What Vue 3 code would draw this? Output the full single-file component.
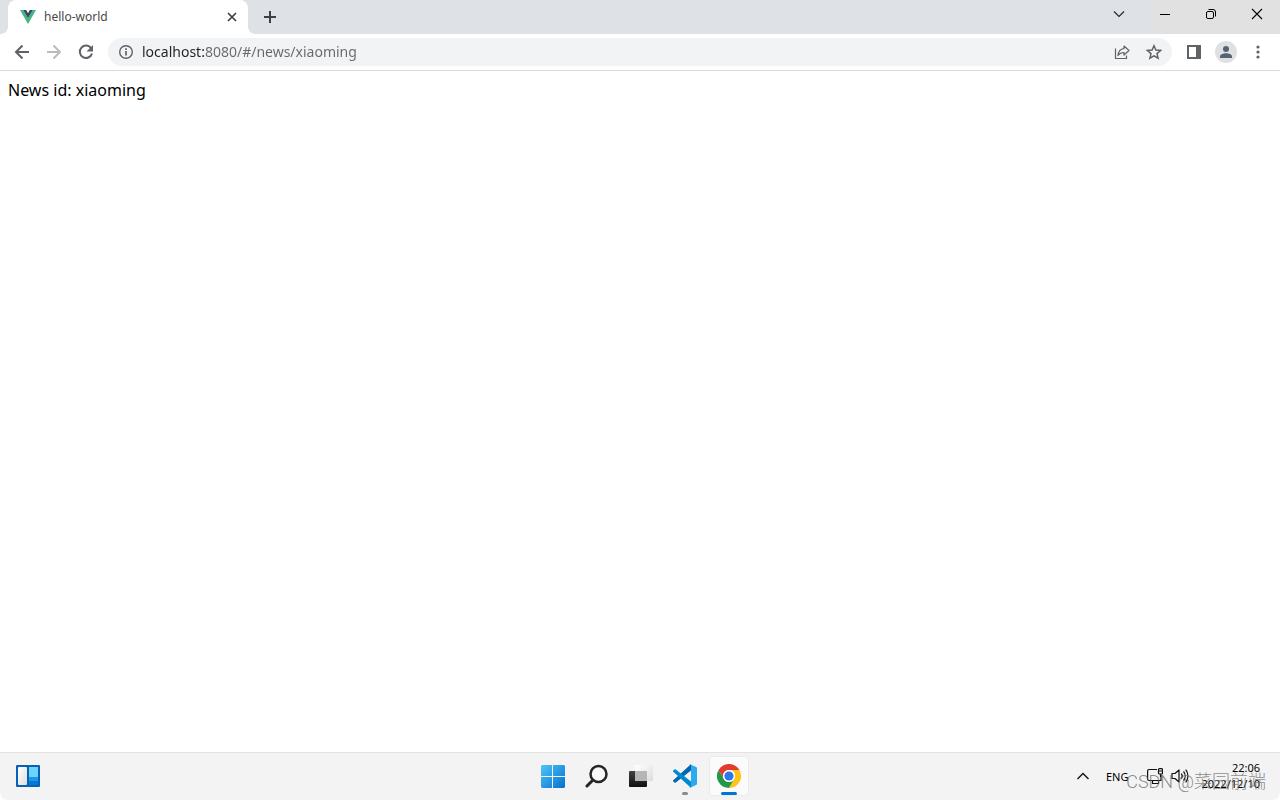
<script setup>
import { ref } from 'vue'

const address = ref('localhost:8080/#/news/xiaoming')
const newsId = ref('xiaoming')
</script>

<template>
  <div class="desktop">
    <header class="tabstrip">
      <div class="tab">
        <svg class="favicon" width="16" height="16" viewBox="0 0 16 16" aria-hidden="true">
          <path d="M0 1h3.2L8 9.3 12.8 1H16L8 15z" fill="#41b883" />
          <path d="M3.2 1h3L8 4.2 9.8 1h3L8 9.3z" fill="#35495e" />
        </svg>
        <span class="tab-title">hello-world</span>
        <button class="tab-close" aria-label="Close tab">
          <svg width="16" height="16" viewBox="0 0 16 16"><path d="M4 4l8 8M12 4l-8 8" stroke="#3c4043" stroke-width="1.7" /></svg>
        </button>
      </div>
      <button class="new-tab" aria-label="New tab">
        <svg width="14" height="14" viewBox="0 0 14 14"><path d="M7 1v12M1 7h12" stroke="#3c4043" stroke-width="2" /></svg>
      </button>
      <div class="window-controls">
        <button class="search-tabs" aria-label="Search tabs">
          <svg width="12" height="12" viewBox="0 0 12 12"><path d="M1 3.5l5 5 5-5" fill="none" stroke="#222" stroke-width="1.1" /></svg>
        </button>
        <button aria-label="Minimize">
          <svg width="12" height="12" viewBox="0 0 12 12"><path d="M1 6.5h10" stroke="#000" /></svg>
        </button>
        <button aria-label="Restore">
          <svg width="12" height="12" viewBox="0 0 12 12" fill="none" stroke="#000"><rect x="1.5" y="3.5" width="7" height="7" rx="1.5" /><path d="M3.5 1.5h4.500a2.500 2.500 0 0 1 2.500 2.500v4.500" /></svg>
        </button>
        <button aria-label="Close">
          <svg width="12" height="12" viewBox="0 0 12 12"><path d="M1 1l10 10M11 1L1 11" stroke="#000" stroke-width="1.1" /></svg>
        </button>
      </div>
    </header>

    <nav class="toolbar" aria-label="Browser toolbar">
      <button class="tool" aria-label="Back">
        <svg width="16" height="16" viewBox="0 0 16 16" fill="none" stroke="#5f6368" stroke-width="2"><path d="M15 8H2.500M8.500 1.500L2 8l6.500 6.500" /></svg>
      </button>
      <button class="tool" aria-label="Forward" disabled>
        <svg width="16" height="16" viewBox="0 0 16 16" fill="none" stroke="#babcbe" stroke-width="2"><path d="M1 8h12.500M7.500 1.500L14 8l-6.500 6.500" /></svg>
      </button>
      <button class="tool" aria-label="Reload">
        <svg width="16" height="16" viewBox="0 0 16 16"><path d="M13.300 4.500A6.200 6.200 0 1 0 14 9.500" fill="none" stroke="#5f6368" stroke-width="2" /><path d="M15 1v6.500H8.500z" fill="#5f6368" /></svg>
      </button>
      <div class="omnibox">
        <button class="site-info" aria-label="View site information">
          <svg width="16" height="16" viewBox="0 0 16 16"><circle cx="8" cy="8" r="6.300" fill="none" stroke="#5f6368" stroke-width="1.400" /><path d="M8 7v4.500M8 4.300v1.700" stroke="#5f6368" stroke-width="1.700" /></svg>
        </button>
        <input v-model="address" class="address" type="text" aria-label="Address" spellcheck="false" />
        <button class="tool" aria-label="Share">
          <svg width="16" height="16" viewBox="0 0 16 16" fill="none" stroke="#5f6368" stroke-width="1.200"><path d="M1.500 4.500v10h11v-3" /><path d="M10 2l5 4.500-5 4.500V8.500C7.500 8.500 5.500 9.300 4 11.500c.3-4 2.500-6.500 6-7z" stroke-linejoin="round" /></svg>
        </button>
        <button class="tool" aria-label="Bookmark this page">
          <svg width="16" height="16" viewBox="0 0 16 16"><path d="M8 1.800l1.900 4.300 4.700.4-3.600 3.100 1.100 4.600L8 11.800l-4.100 2.400L5 9.600 1.400 6.500l4.700-.4z" fill="none" stroke="#5f6368" stroke-width="1.500" /></svg>
        </button>
      </div>
      <div class="toolbar-actions">
        <button class="tool" aria-label="Side panel">
          <svg width="14" height="14" viewBox="0 0 14 14"><path fill="#5f6368" fill-rule="evenodd" d="M0 0h14v14H0zM2 2v10h7V2z" /></svg>
        </button>
        <button class="tool" aria-label="Profile">
          <svg width="22" height="22" viewBox="0 0 22 22"><circle cx="11" cy="11" r="11" fill="#dfe0e2" /><circle cx="11" cy="8" r="3" fill="#566173" /><path d="M5 17v-1.500C5 13.300 8.500 12.300 11 12.300s6 1 6 3.200V17z" fill="#566173" /></svg>
        </button>
        <button class="tool" aria-label="Menu">
          <svg width="4" height="14" viewBox="0 0 4 14" fill="#5f6368"><circle cx="2" cy="2" r="1.600" /><circle cx="2" cy="7" r="1.600" /><circle cx="2" cy="12" r="1.600" /></svg>
        </button>
      </div>
    </nav>

    <main class="page">News id: {{ newsId }}</main>

    <footer class="taskbar">
      <div class="taskbar-left">
        <button class="task" aria-label="Widgets">
          <svg width="24" height="24" viewBox="0 0 24 24">
            <defs>
              <linearGradient id="paper" x2="1" y2="1"><stop stop-color="#fff" /><stop offset="1" stop-color="#dedede" /></linearGradient>
            </defs>
            <rect y="1" width="24" height="22" rx="1" fill="#0862b3" />
            <rect x="2" y="3" width="9" height="18" rx="1" fill="url(#paper)" />
            <rect x="13" y="3" width="9" height="10" fill="#6bd5fc" />
            <rect x="13" y="13" width="9" height="4" fill="#1799ef" />
            <rect x="13" y="17" width="9" height="4" fill="#0877d4" />
          </svg>
        </button>
      </div>
      <div class="apps">
        <button class="task" aria-label="Start">
          <svg width="24" height="24" viewBox="0 0 24 24">
            <defs>
              <linearGradient id="start" x1="0" y1="0" x2="24" y2="24" gradientUnits="userSpaceOnUse"><stop stop-color="#50c7f8" /><stop offset="1" stop-color="#0670cf" /></linearGradient>
            </defs>
            <path d="M1 1h10v11H0V2zM12 1h11l1 1v10H12zM0 13h11v11H1l-1-1zM12 13h12v10l-1 1H12z" fill="url(#start)" />
          </svg>
        </button>
        <button class="task" aria-label="Search">
          <svg width="24" height="24" viewBox="0 0 24 24" fill="none" stroke="#242424"><circle cx="13.500" cy="10" r="8" stroke-width="2.500" fill="#f8f8f8" /><path d="M7.700 16.200L2 22" stroke-width="3" stroke-linecap="round" /></svg>
        </button>
        <button class="task" aria-label="Task view">
          <svg width="24" height="24" viewBox="0 0 24 24">
            <defs>
              <linearGradient id="back" x2="0" y2="1"><stop stop-color="#424242" /><stop offset="1" stop-color="#111" /></linearGradient>
              <linearGradient id="front" x2="1" y2="1"><stop stop-color="#fff" /><stop offset="1" stop-color="#dcdcdc" /></linearGradient>
            </defs>
            <rect y="7" width="18" height="16" rx="1" fill="url(#back)" />
            <rect x="6" y="1" width="18" height="16" rx="1" fill="url(#front)" />
            <path d="M6 7h12v10H6z" fill="#b5b5b5" />
          </svg>
        </button>
        <button class="task" aria-label="Visual Studio Code">
          <svg width="24" height="24" viewBox="0 0 24 24">
            <path d="M0 16.500L16.500 1.400 18 0v6.500L2.800 18.600c-.4.3-.9.300-1.300 0L.2 17.500c-.4-.3-.4-.7-.2-1z" fill="#0068ad" />
            <path d="M0 7.500L16.500 22.600 18 24v-6.500L2.800 5.400c-.4-.3-.9-.3-1.300 0L.2 6.500c-.4.3-.4.700-.2 1z" fill="#008bd0" />
            <path d="M17 .2L23.200 3c.5.300.8.700.8 1.300v15.400c0 .6-.3 1-.8 1.300L17 23.800c-.6.200-1.200 0-1.600-.4.900.8 2.600.3 2.600-1V1.600c0-1.300-1.700-1.800-2.600-1 .4-.4 1-.6 1.600-.4z" fill="#2caaf0" />
          </svg>
          <span class="running"></span>
        </button>
        <button class="task current" aria-label="Google Chrome">
          <svg width="24" height="24" viewBox="0 0 24 24">
            <path d="M1.600 6A12 12 0 0 1 22.400 6H12a6 6 0 0 0-5.200 9z" fill="#e33b2e" />
            <path d="M22.400 6A12 12 0 0 1 12 24l5.200-9A6 6 0 0 0 12 6z" fill="#ffc416" />
            <path d="M12 24A12 12 0 0 1 1.600 6l5.200 9a6 6 0 0 0 10.400 0z" fill="#249849" />
            <circle cx="12" cy="12" r="6" fill="#fff" />
            <circle cx="12" cy="12" r="4.600" fill="#3076eb" />
          </svg>
          <span class="running"></span>
        </button>
      </div>
      <div class="tray">
        <button class="tray-item" aria-label="Show hidden icons">
          <svg width="14" height="14" viewBox="0 0 14 14"><path d="M1.500 10L7 4.500l5.500 5.500" fill="none" stroke="#111" stroke-width="1.400" /></svg>
        </button>
        <button class="tray-item language">ENG</button>
        <button class="tray-item" aria-label="Network">
          <svg width="16" height="16" viewBox="0 0 16 16" fill="none" stroke="#111" stroke-width="1.200"><path d="M10 1.500H2A1.500 1.500 0 0 0 .6 3v8A1.500 1.500 0 0 0 2 12.500h12V7M5.500 12.500v3h6v-3" /><rect x="11.500" y=".6" width="4" height="5.400" rx="1" /><path d="M11.500 3h4M13.500 6v3" /></svg>
        </button>
        <button class="tray-item" aria-label="Volume">
          <svg width="18" height="16" viewBox="0 0 18 16" fill="none" stroke="#111" stroke-width="1.200"><path d="M1 5.500h3L8 2v12l-4-3.500H1z" stroke-linejoin="round" /><path d="M10.300 5.500a4 4 0 0 1 0 5M12.500 3.500a7 7 0 0 1 0 9M14.700 1.700a10 10 0 0 1 0 12.600" /></svg>
        </button>
        <button class="clock"><span>22:06</span><span>2022/12/10</span></button>
      </div>
      <span class="watermark">CSDN @菜园前端</span>
    </footer>
  </div>
</template>

<style>
body {
  background: #fff;
}
</style>

<style scoped>
.desktop {
  display: flex;
  flex-direction: column;
  min-height: 100vh;
  font-family: "Noto Sans", "Noto Sans CJK SC", sans-serif;
  color: #000;
}
button {
  display: flex;
  align-items: center;
  justify-content: center;
  padding: 0;
  border: 0;
  background: none;
  color: inherit;
  font: inherit;
}
svg {
  display: block;
  flex: none;
}
.tabstrip {
  display: flex;
  height: 34px;
  padding-left: 8px;
  background: #dee1e6;
}
.tab {
  position: relative;
  display: flex;
  align-items: center;
  gap: 8px;
  box-sizing: border-box;
  width: 240px;
  padding: 0 8px 0 12px;
  border-radius: 8px 8px 0 0;
  background: #fff;
}
.tab::before,
.tab::after {
  content: "";
  position: absolute;
  bottom: 0;
  width: 8px;
  height: 8px;
}
.tab::before {
  right: 100%;
  background: radial-gradient(circle at 0 0, transparent 8px, #fff 8px);
}
.tab::after {
  left: 100%;
  background: radial-gradient(circle at 100% 0, transparent 8px, #fff 8px);
}
.tab-title {
  flex: 1;
  font-size: 12px;
  line-height: 18px;
  color: #45494d;
}
.new-tab {
  width: 28px;
  margin-left: 8px;
}
.window-controls {
  display: flex;
  margin-left: auto;
  background: linear-gradient(90deg, #dee1e6 56px, #e1e1e2 56px);
}
.window-controls button {
  width: 46px;
  height: 28px;
}
.toolbar {
  display: flex;
  align-items: center;
  gap: 4px;
  height: 36px;
  padding: 0 8px;
  border-bottom: 1px solid #d9dadc;
  background: #fff;
}
.tool {
  width: 28px;
  height: 28px;
}
.omnibox {
  display: flex;
  flex: 1;
  align-items: center;
  gap: 4px;
  height: 28px;
  margin-left: 4px;
  padding: 0 4px 0 10px;
  border-radius: 14px;
  background: #f1f3f4;
}
.site-info {
  width: 16px;
  height: 28px;
}
.address {
  flex: 1;
  min-width: 0;
  height: 24px;
  margin-left: 4px;
  padding: 0 0 2px;
  border: 0;
  outline: 0;
  background: linear-gradient(90deg, #202124 62px, #65696e 62px);
  -webkit-background-clip: text;
  background-clip: text;
  color: transparent;
  caret-color: #202124;
  font: inherit;
  font-size: 14px;
}
.toolbar-actions {
  display: flex;
  gap: 4px;
  margin-left: 4px;
}
.page {
  flex: 1;
  padding: 8px;
  background: #fff;
  font-size: 16px;
  line-height: 22px;
}
.taskbar {
  position: relative;
  display: grid;
  grid-template-columns: 1fr auto 1fr;
  align-items: center;
  box-sizing: border-box;
  height: 48px;
  padding-bottom: 1px;
  border-top: 1px solid #e3e3e3;
  border-radius: 0 0 8px 8px;
  background: #f3f3f3;
}
.taskbar-left {
  padding-left: 8px;
}
.apps {
  display: flex;
  gap: 4px;
  padding-left: 2px;
}
.task {
  position: relative;
  box-sizing: border-box;
  width: 40px;
  height: 40px;
  border: 1px solid transparent;
  border-radius: 4px;
}
.current {
  border-color: #ebebeb;
  background: #fbfbfb;
}
.running {
  position: absolute;
  bottom: 0;
  left: calc(50% - 3px);
  width: 6px;
  height: 3px;
  border-radius: 2px;
  background: #8a8a8a;
}
.current .running {
  left: calc(50% - 8px);
  width: 16px;
  background: #0074d4;
}
.tray {
  display: flex;
  align-items: center;
  justify-content: flex-end;
  gap: 8px;
  padding-right: 20px;
}
.language {
  margin: 0 11px 0 8px;
  font-size: 11px;
}
.clock {
  flex-direction: column;
  align-items: flex-end;
  margin-left: 4px;
  font-size: 11px;
  line-height: 16px;
}
.watermark {
  position: absolute;
  right: 14px;
  bottom: 5px;
  color: rgba(110, 110, 110, 0.8);
  font-family: Roboto, "Noto Sans CJK SC", sans-serif;
  font-size: 18px;
  font-weight: 300;
  line-height: 26px;
  pointer-events: none;
}
</style>
